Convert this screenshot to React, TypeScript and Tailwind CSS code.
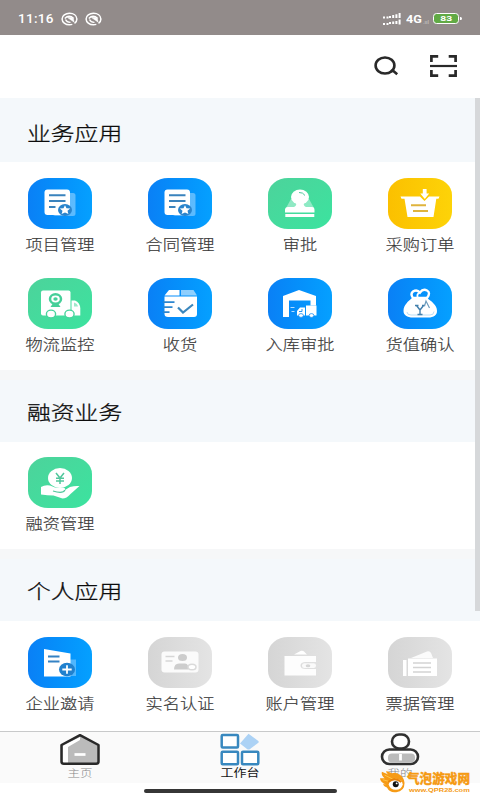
import type { ReactNode } from "react";

const ICONS: Record<string, ReactNode> = {
  doc: (
    <>
      <rect x="25" y="15" width="22.5" height="23" rx="2.5" fill="#fff" opacity=".35" />
      <rect x="16.5" y="11.5" width="25.5" height="25.5" rx="3" fill="#fff" />
      <path d="M21 17.3h16.500M21 22.900h16.500M21 29h6.500" stroke="#3a83bd" strokeWidth="2" />
      <ellipse cx="37" cy="32" rx="7" ry="6" fill="#2a84cc" />
      <path d="M37 27.300l1.500 2.900 3.700.3-2.700 2.300.9 3.200-3.400-1.600-3.400 1.600.9-3.200-2.700-2.300 3.700-.3z" fill="#fff" />
    </>
  ),
  stamp: (
    <>
      <path d="M23 21l-5 9h28l-5-9z" fill="#fff" opacity=".4" />
      <ellipse cx="32" cy="19" rx="9" ry="7.500" fill="#fff" />
      <path d="M28 24h8c-1 4 1 5 4 5.500H24c3-.5 5-1.500 4-5.500z" fill="#fff" />
      <path d="M20 29h24q2.500 0 2.500 3v2.500h-29.500V32q0-3 3-3zM17.300 36h29v3h-29z" fill="#fff" />
      <path d="M31 14.500q4-.3 6 3" stroke="#4fc79b" strokeWidth="1" fill="none" />
    </>
  ),
  basket: (
    <>
      <path d="M12.500 18.500H32l4.500 4.500 4.500-4.500h10.500l-1 2.200h-2.200L45.500 39h-26L16.500 20.700h-3z" fill="#fff" />
      <path d="M34.800 11h3.800v4.500h2.600l-4.400 5.500-4.500-5.500h2.500z" fill="#fff" />
      <path d="M23 27.300h15M25 33h15" stroke="#dfb43d" strokeWidth="1.900" />
    </>
  ),
  camtruck: (
    <>
      <rect x="13" y="12.500" width="29.500" height="25" rx="2" fill="#fff" />
      <path d="M43.500 22.500h3.500q5 2 5.300 8v7h-8.800z" fill="#fff" />
      <path d="M46 24.500q3.500 1 4 4h-4z" fill="#9fe8ca" />
      <ellipse cx="23" cy="36" rx="4.600" ry="3.900" fill="#fff" stroke="#47d49c" strokeWidth="1.400" />
      <ellipse cx="41.500" cy="36" rx="4.600" ry="3.900" fill="#fff" stroke="#47d49c" strokeWidth="1.400" />
      <ellipse cx="27.500" cy="21" rx="5.500" ry="4.700" fill="none" stroke="#45cf99" strokeWidth="2.500" />
      <ellipse cx="27.500" cy="21" rx="2.200" ry="1.800" fill="#45cf99" />
      <path d="M24.500 26h6l2 3h-10z" fill="#45cf99" />
    </>
  ),
  box: (
    <>
      <path d="M21 12h10.500v5.500H16.500z" fill="#fff" />
      <path d="M33 12h12.500l3.500 5.500H33z" fill="#fff" opacity=".55" />
      <path d="M16.500 18.500H49V36q0 3-3 3H20q-3.500 0-3.500-3z" fill="#fff" />
      <path d="M15 24.200h11.500M15 29.200h9.500M15 34.200h6.500" stroke="#2c86d0" strokeWidth="1.700" />
      <path d="M30 29.500l5 5L45 26.500" stroke="#3b87bd" strokeWidth="2.200" fill="none" />
    </>
  ),
  warehouse: (
    <>
      <path d="M15 18l16-6 17 6v9.500h-5.500V22.500H21V39h-6z" fill="#fff" />
      <path d="M38 27.500h10.500v10H38z" fill="#fff" />
      <path d="M32 29.500h5v8h-8v-4.500z" fill="#fff" />
      <path d="M34 31v2.500h-3" stroke="#128aef" fill="none" strokeWidth=".9" />
      <ellipse cx="33" cy="37.500" rx="2.400" ry="1.900" fill="#fff" stroke="#168df2" strokeWidth=".8" />
      <ellipse cx="43.500" cy="37.500" rx="2.400" ry="1.900" fill="#fff" stroke="#168df2" strokeWidth=".8" />
      <path d="M22.500 29.500h4M23.500 33.500h3" stroke="#b4ddff" />
    </>
  ),
  bag: (
    <>
      <path d="M25 20q-3-4 0-6.500 4-2.500 7 1 3-4 7-2t0 7.500z" fill="none" stroke="#fff" strokeWidth="2.400" />
      <path d="M30 20q-2-4 2-5.500" fill="none" stroke="#fff" strokeWidth="1.800" />
      <path d="M24 20h15c4 3 10 7 10 13 0 4-3 6.500-9 6.500h-15c-6 0-9.500-2.500-9.500-6.500 0-6 5-10 8.500-13z" fill="#fff" />
      <path d="M19 34q0 3 4 3h19q4 0 4-3.500" stroke="#aad5f3" strokeWidth=".8" fill="none" />
      <path d="M27 27.500h3.500M34 27.500h3M28.500 27.500l3.500 4.500 3.500-4.500M32 32v4.500M29.500 36.500h5" stroke="#427fac" strokeWidth="1.400" fill="none" />
      <path d="M36.500 28l1.500-5 3.500 7" stroke="#6d9cbd" strokeWidth="1.200" fill="none" />
    </>
  ),
  hand: (
    <>
      <ellipse cx="32" cy="21" rx="12" ry="10" fill="#fff" />
      <path d="M28 16l4 5 4-5M32 21v6M28 21.300h8M28 24h8" stroke="#51c79c" strokeWidth="1.500" fill="none" />
      <path d="M13 30q4-2.500 9-1.500l5 2h8q2.500.3 2 2.500l5-3q5-1.500 9.500-1l-9 8q-4 4.500-8 4.500l-9-3q-6 0-12.500-1z" fill="#fff" />
      <path d="M25 34q10 3 12-1" stroke="#51c79c" strokeWidth="1.200" fill="none" />
    </>
  ),
  invite: (
    <>
      <path d="M40 22.500h8V39h-8z" fill="#fff" opacity=".3" />
      <path d="M16 12l26.500 4.500V39.500H16z" fill="#fff" />
      <path d="M20 19.500h11.500M20 24.500h11.500" stroke="#3482c4" strokeWidth="1.800" />
      <ellipse cx="39" cy="32.500" rx="8" ry="6.800" fill="#2181ce" />
      <path d="M39 28.300v8.400M34.300 32.500h9.400" stroke="#fff" strokeWidth="1.800" />
    </>
  ),
  idcard: (
    <>
      <rect x="13.500" y="14.500" width="37" height="21" rx="3" fill="#fbfbfb" />
      <path d="M17.500 19.500h9M17.500 24h7" stroke="#d6d6d6" strokeWidth="1.500" />
      <ellipse cx="34.500" cy="20.500" rx="4.500" ry="3.500" fill="#cdcdcd" />
      <path d="M26 32.500q0-6 5-6h6q2 0 3 2v4z" fill="#cdcdcd" />
      <ellipse cx="44" cy="30" rx="4" ry="2.800" fill="#fff" stroke="#dadada" strokeWidth="1.500" />
    </>
  ),
  wallet: (
    <>
      <path d="M26 17.500l7-3.700q2-.5 3 .7l3 3z" fill="#fff" />
      <path d="M16.500 19H48v6H38q-5.500 0-5.500 3.500T38 32h10v6.500H16.500z" fill="#fdfdfd" />
      <rect x="34" y="26.300" width="14" height="4.700" rx="2.300" fill="#fafafa" />
      <ellipse cx="40" cy="28.700" rx="2.300" ry="1.500" fill="#d6d6d6" />
    </>
  ),
  ticket: (
    <>
      <path d="M23 21l16-6.500q3-.6 4 1.500l2 5z" fill="#fbfbfb" />
      <path d="M15 23h3.500v16H15zM20 21.500h29V39H20z" fill="#fff" />
      <path d="M25 26h18M25 30.500h18M25 35h18" stroke="#d3d3d3" strokeWidth="1.600" />
    </>
  ),
};

const TONES = {
  blue: "bg-linear-to-r from-[#0a80f6] to-[#05a0ff]",
  green: "bg-linear-to-br from-[#4cd39b] to-[#3be39f]",
  yellow: "bg-linear-to-r from-[#fbc000] to-[#fdd308]",
  gray: "bg-linear-to-r from-[#d5d5d5] to-[#e4e4e4]",
};

type App = { label: string; icon: string; tone: keyof typeof TONES };

const business: App[] = [
  { label: "项目管理", icon: "doc", tone: "blue" },
  { label: "合同管理", icon: "doc", tone: "blue" },
  { label: "审批", icon: "stamp", tone: "green" },
  { label: "采购订单", icon: "basket", tone: "yellow" },
  { label: "物流监控", icon: "camtruck", tone: "green" },
  { label: "收货", icon: "box", tone: "blue" },
  { label: "入库审批", icon: "warehouse", tone: "blue" },
  { label: "货值确认", icon: "bag", tone: "blue" },
];
const finance: App[] = [{ label: "融资管理", icon: "hand", tone: "green" }];
const personal: App[] = [
  { label: "企业邀请", icon: "invite", tone: "blue" },
  { label: "实名认证", icon: "idcard", tone: "gray" },
  { label: "账户管理", icon: "wallet", tone: "gray" },
  { label: "票据管理", icon: "ticket", tone: "gray" },
];

function Section({ title, apps, first, className, gridClass = "pt-4" }: { title: string; apps: App[]; first?: boolean; className: string; gridClass?: string }) {
  return (
    <section className={className}>
      {!first && <div className="h-[10px] bg-[#f6f7f8]" />}
      <h2 className={`flex items-center bg-[#f4f8fb] pl-[27px] ${first ? "h-16 pt-[6px]" : "h-[62px] pt-[2px]"}`}>
        <span className="origin-center scale-y-[.83] text-[23.8px] leading-none font-light text-[#0c0c0c] [-webkit-text-stroke:.35px_#0c0c0c]">{title}</span>
      </h2>
      <div className={`grid grid-cols-4 ${gridClass}`}>
        {apps.map((a) => (
          <div key={a.label} className="flex h-[100px] flex-col items-center">
            <div className={`h-[51px] w-16 overflow-hidden rounded-[20px/17px] ${TONES[a.tone]}`}>
              <svg viewBox="0 0 64 51" width="64" height="51">{ICONS[a.icon]}</svg>
            </div>
            <span className="mt-[6px] scale-y-[.87] text-[17.2px] leading-[17px] font-light whitespace-nowrap text-[#3a3a3a] [-webkit-text-stroke:.2px_#3a3a3a]">{a.label}</span>
          </div>
        ))}
      </div>
    </section>
  );
}

function StatusGlyph() {
  return (
    <svg width="17" height="14" viewBox="0 0 17 14" fill="none" stroke="#fff">
      <path d="M13.500 11.300Q16 9.500 15.900 7C15.700 3.500 12.500 1.200 8.500 1.200S1.100 3.800 1.100 7s3.300 5.800 7.400 5.800q1.500 0 2.800-.4" strokeWidth="1.500" />
      <path d="M3.800 6.500Q8 2 12.800 6.500M4.500 7.500q1.500 3 5 2.800" strokeWidth="1.300" />
      <path d="M6.500 5.500l6.500 4.500q0-3.500-2.500-4.500z" fill="#fff" strokeWidth=".6" />
    </svg>
  );
}

function StatusBar() {
  return (
    <header className="flex h-[34.500px] items-center bg-[#928b8a] pt-[3px] pr-[18px] pl-[18px] font-['Roboto',sans-serif] font-medium text-white">
      <span className="w-[36px] scale-y-[.9] text-[13.500px] leading-none tracking-[.3px]">11:16</span>
      <div className="ml-[7px] flex gap-[7px]">
        <StatusGlyph />
        <StatusGlyph />
      </div>
      <svg className="ml-auto" width="19" height="12" viewBox="0 0 19 12" stroke="#fff" strokeWidth="2">
        <path d="M1 4.500h2M4.500 4.500h2M8 3v2M11.200 2v3M14.400 1.200v3.800M17.600 0v5M1 11h2M4.500 11h2M8 9v2M11.200 8.500V11M14.400 8v3M17.600 6.500V11.500" />
      </svg>
      <span className="ml-[5px] flex w-[27px] items-end scale-y-[.82] text-[14px] leading-none font-bold">
        <span className="w-[17px] origin-left scale-x-[.9]">4G</span>
        <span className="text-[6px] font-normal opacity-50">.ııl</span>
      </span>
      <div className="flex h-[11px] w-[26px] items-center justify-center rounded-[3.500px] border-[1.500px] border-white bg-[#61aa45]">
        <span className="scale-x-[1.15] scale-y-[.85] text-[9px] leading-none font-bold">83</span>
      </div>
      <div className="ml-px h-[3px] w-[2px] rounded-r bg-white" />
    </header>
  );
}

function TopBar() {
  return (
    <div className="flex h-[63.500px] items-center justify-end gap-[31px] bg-white pr-[23px]">
      <svg width="25" height="22" viewBox="0 0 25 22" fill="none" stroke="#292929" strokeWidth="2.600">
        <ellipse cx="11" cy="10.500" rx="9.400" ry="8" />
        <path d="M16.800 16.300l2-.8 4.400 3.700" />
      </svg>
      <svg width="27" height="22" viewBox="0 0 27 22" fill="none" stroke="#292929" strokeWidth="2.700">
        <path d="M1.400 7V1.400h6.800M18.700 1.400h6.900V7M1.400 15v5.600h6.800M18.700 20.600h6.900V15" />
        <path d="M0 11h27" strokeWidth="2.200" />
      </svg>
    </div>
  );
}

function NavBar() {
  return (
    <nav className="h-[52px] border-t border-[#c8c9ca] bg-[#fafafa]">
      <div className="grid grid-cols-3 pt-px">
        <div className="flex flex-col items-center">
          <svg width="42" height="33" viewBox="0 0 42 33">
            <path d="M3.300 12L21 3 38.700 12v16.500q0 2.500-3 2.500H6.300q-3 0-3-2.500z" fill="#bbb" />
            <path d="M4 12.500L21 4v3L9 14v16.500H4z" fill="#fff" />
            <path d="M2.500 12L21 2.200 39.500 12v16.500q0 2.300-2.300 2.300H4.800q-2.300 0-2.300-2.300z" fill="none" stroke="#292929" strokeWidth="2.500" strokeLinejoin="round" />
            <path d="M15.500 21.500h11" stroke="#fff" strokeWidth="2.700" />
          </svg>
          <span className="mt-[-1px] scale-y-[.86] text-[12.500px] leading-[16px] font-light text-[#888]">主页</span>
        </div>
        <div className="flex flex-col items-center">
          <svg width="40" height="33" viewBox="0 0 40 33">
            <path d="M28.500.7l9.500 7q1.500 1.200 0 2.300l-8 6q-1.500 1-3 0l-7-5.500z" fill="#acd2f5" />
            <g fill="#fff" stroke="#3888bf" strokeWidth="2.500">
              <rect x="1.700" y="2" width="16.300" height="12.500" rx="1" />
              <rect x="1.700" y="18.700" width="16.300" height="12.500" rx="1" />
              <rect x="22" y="18.700" width="16.300" height="12.500" rx="1" />
            </g>
          </svg>
          <span className="mt-[-1px] scale-y-[.86] text-[13px] leading-[16px] text-[#151515]">工作台</span>
        </div>
        <div className="relative flex flex-col items-center">
          <svg width="40" height="33" viewBox="0 0 40 33" fill="none">
            <rect x="2" y="16.500" width="36" height="14.500" rx="7.300" fill="#fff" stroke="#303030" strokeWidth="2.600" />
            <rect x="8" y="20.500" width="27" height="9" rx="4" fill="#bbb" />
            <path d="M20.500 21v6.500" stroke="#fff" strokeWidth="2.800" />
            <rect x="12" y="1.500" width="17" height="14" rx="7" fill="#fff" stroke="#303030" strokeWidth="2.600" />
          </svg>
          <span className="mt-[-1px] scale-y-[.86] text-[12.500px] leading-[16px] font-light text-[#888]">我的</span>
          <Watermark />
        </div>
      </div>
    </nav>
  );
}

/* Site badge laid over the corner of the tab bar. */
function Watermark() {
  return (
    <div className="absolute top-[37px] left-[60px] flex h-[26px] items-start">
      <svg width="25" height="24" viewBox="0 0 27 24">
        <path d="M5 8Q1 5 2 1l7 3Q6 1 7 0l6 2.500q4-1.500 8 1.500 5 3 5.500 9 0 9-9 10-7 1-10-5-4-1-4-4l3 1Q0 12 0 8z" fill="#f69b16" />
        <path d="M5 4.500l9 4.500M3 9.500l7 2" stroke="#ffc64a" strokeWidth="1" />
        <ellipse cx="17" cy="14.500" rx="7.500" ry="6" fill="#fff" />
        <path d="M9 12q7-6 14 0" stroke="#e8830b" strokeWidth="2" fill="none" />
        <circle cx="17" cy="14.500" r="3.200" fill="#111" />
        <circle cx="18" cy="13.500" r="1" fill="#fff" />
      </svg>
      <div className="flex w-[64px] flex-col items-start pt-px pl-[2px]">
        <span className="h-[14px] text-[12.600px] leading-[14px] font-black whitespace-nowrap text-[#f59a14] [-webkit-text-stroke:.3px_#f59a14]">气泡游戏网</span>
        <span className="mt-px ml-[2px] origin-left scale-x-[1.06] scale-y-[.85] font-['Liberation_Sans',sans-serif] text-[7px] leading-[8px] font-bold whitespace-nowrap text-[#f59a14]">www.QPR28.com</span>
      </div>
    </div>
  );
}

export default function App() {
  return (
    <div className="flex h-[800px] w-[480px] flex-col overflow-hidden bg-white font-['Noto_Sans_CJK_SC',sans-serif]">
      <StatusBar />
      <TopBar />
      <main className="relative h-[633px] shrink-0 overflow-hidden bg-white">
        <Section title="业务应用" apps={business} first className="h-[272px]" />
        <Section title="融资业务" apps={finance} className="h-[179px]" gridClass="pt-[15px]" />
        <Section title="个人应用" apps={personal} className="h-[182px]" />
        <div className="absolute top-0 right-0 h-[513px] w-[5px] bg-[#d6d8da]" />
      </main>
      <NavBar />
      <div className="flex flex-1 justify-center bg-white pt-[6px]">
        <div className="h-[4px] w-[193px] rounded-full bg-[#363636]" />
      </div>
    </div>
  );
}
